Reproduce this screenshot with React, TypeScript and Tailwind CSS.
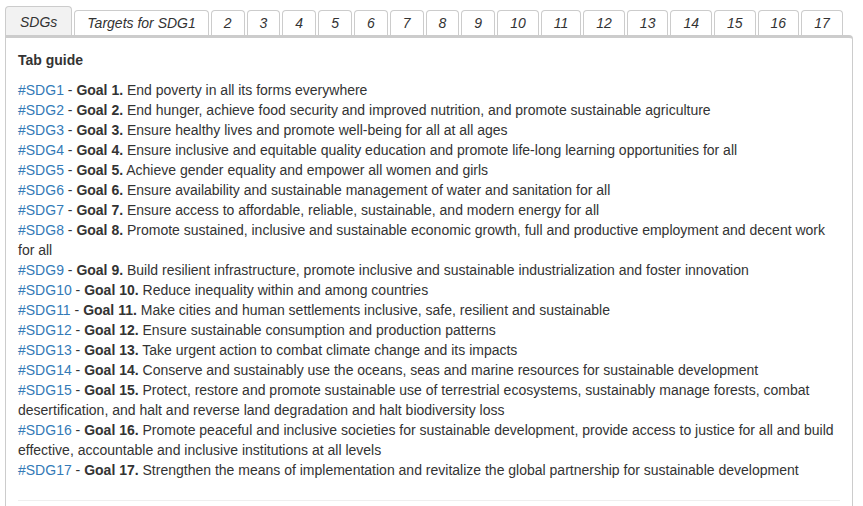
import React from 'react';

// Tab labels along the top strip
const tabs: string[] = [
  "SDGs",
  "Targets for SDG1",
  "2", "3", "4", "5", "6", "7", "8", "9",
  "10", "11", "12", "13", "14", "15", "16", "17",
];

// Goal texts shown in the guide
const goals: string[] = [
  "End poverty in all its forms everywhere",
  "End hunger, achieve food security and improved nutrition, and promote sustainable agriculture",
  "Ensure healthy lives and promote well-being for all at all ages",
  "Ensure inclusive and equitable quality education and promote life-long learning opportunities for all",
  "Achieve gender equality and empower all women and girls",
  "Ensure availability and sustainable management of water and sanitation for all",
  "Ensure access to affordable, reliable, sustainable, and modern energy for all",
  "Promote sustained, inclusive and sustainable economic growth, full and productive employment and decent work for all",
  "Build resilient infrastructure, promote inclusive and sustainable industrialization and foster innovation",
  "Reduce inequality within and among countries",
  "Make cities and human settlements inclusive, safe, resilient and sustainable",
  "Ensure sustainable consumption and production patterns",
  "Take urgent action to combat climate change and its impacts",
  "Conserve and sustainably use the oceans, seas and marine resources for sustainable development",
  "Protect, restore and promote sustainable use of terrestrial ecosystems, sustainably manage forests, combat desertification, and halt and reverse land degradation and halt biodiversity loss",
  "Promote peaceful and inclusive societies for sustainable development, provide access to justice for all and build effective, accountable and inclusive institutions at all levels",
  "Strengthen the means of implementation and revitalize the global partnership for sustainable development",
];

export default function App() {
  return (
    <div className="min-h-screen bg-white pt-[6px] pl-[5px] font-['Liberation_Sans',Arial,sans-serif] text-[14px] text-[#333]">
      <div className="w-[848px]">
        {/* Tab strip */}
        <ul className="flex items-end gap-[2px]">
          {tabs.map((label, i) =>
            i === 0 ? (
              <li
                key={label}
                className="h-[29px] rounded-t-[4px] border border-b-0 border-[#ccc] bg-[#f2f2f2] px-[14px] pt-[5px] pb-[3px] leading-5 italic"
              >
                {label}
              </li>
            ) : (
              <li
                key={label}
                className="h-[25px] rounded-t-[4px] border border-b-0 border-[#ccc] bg-white px-3 pt-[2px] pb-[2px] leading-5 italic"
              >
                {label}
              </li>
            )
          )}
        </ul>

        {/* Panel */}
        <div className="rounded-tr-[4px] border-x border-t-[3px] border-[#ccc] px-3 pt-[12px]">
          <h4 className="font-bold leading-5">Tab guide</h4>
          <div className="mt-[10px] leading-5">
            {goals.map((text, i) => (
              <div key={i}>
                <a className="text-[#337ab7]">#SDG{i + 1}</a> - <b>Goal {i + 1}.</b> {text}
              </div>
            ))}
          </div>
          <hr className="mt-5 border-t border-[#eee]" />
          <div className="h-10" />
        </div>
      </div>
    </div>
  );
}
